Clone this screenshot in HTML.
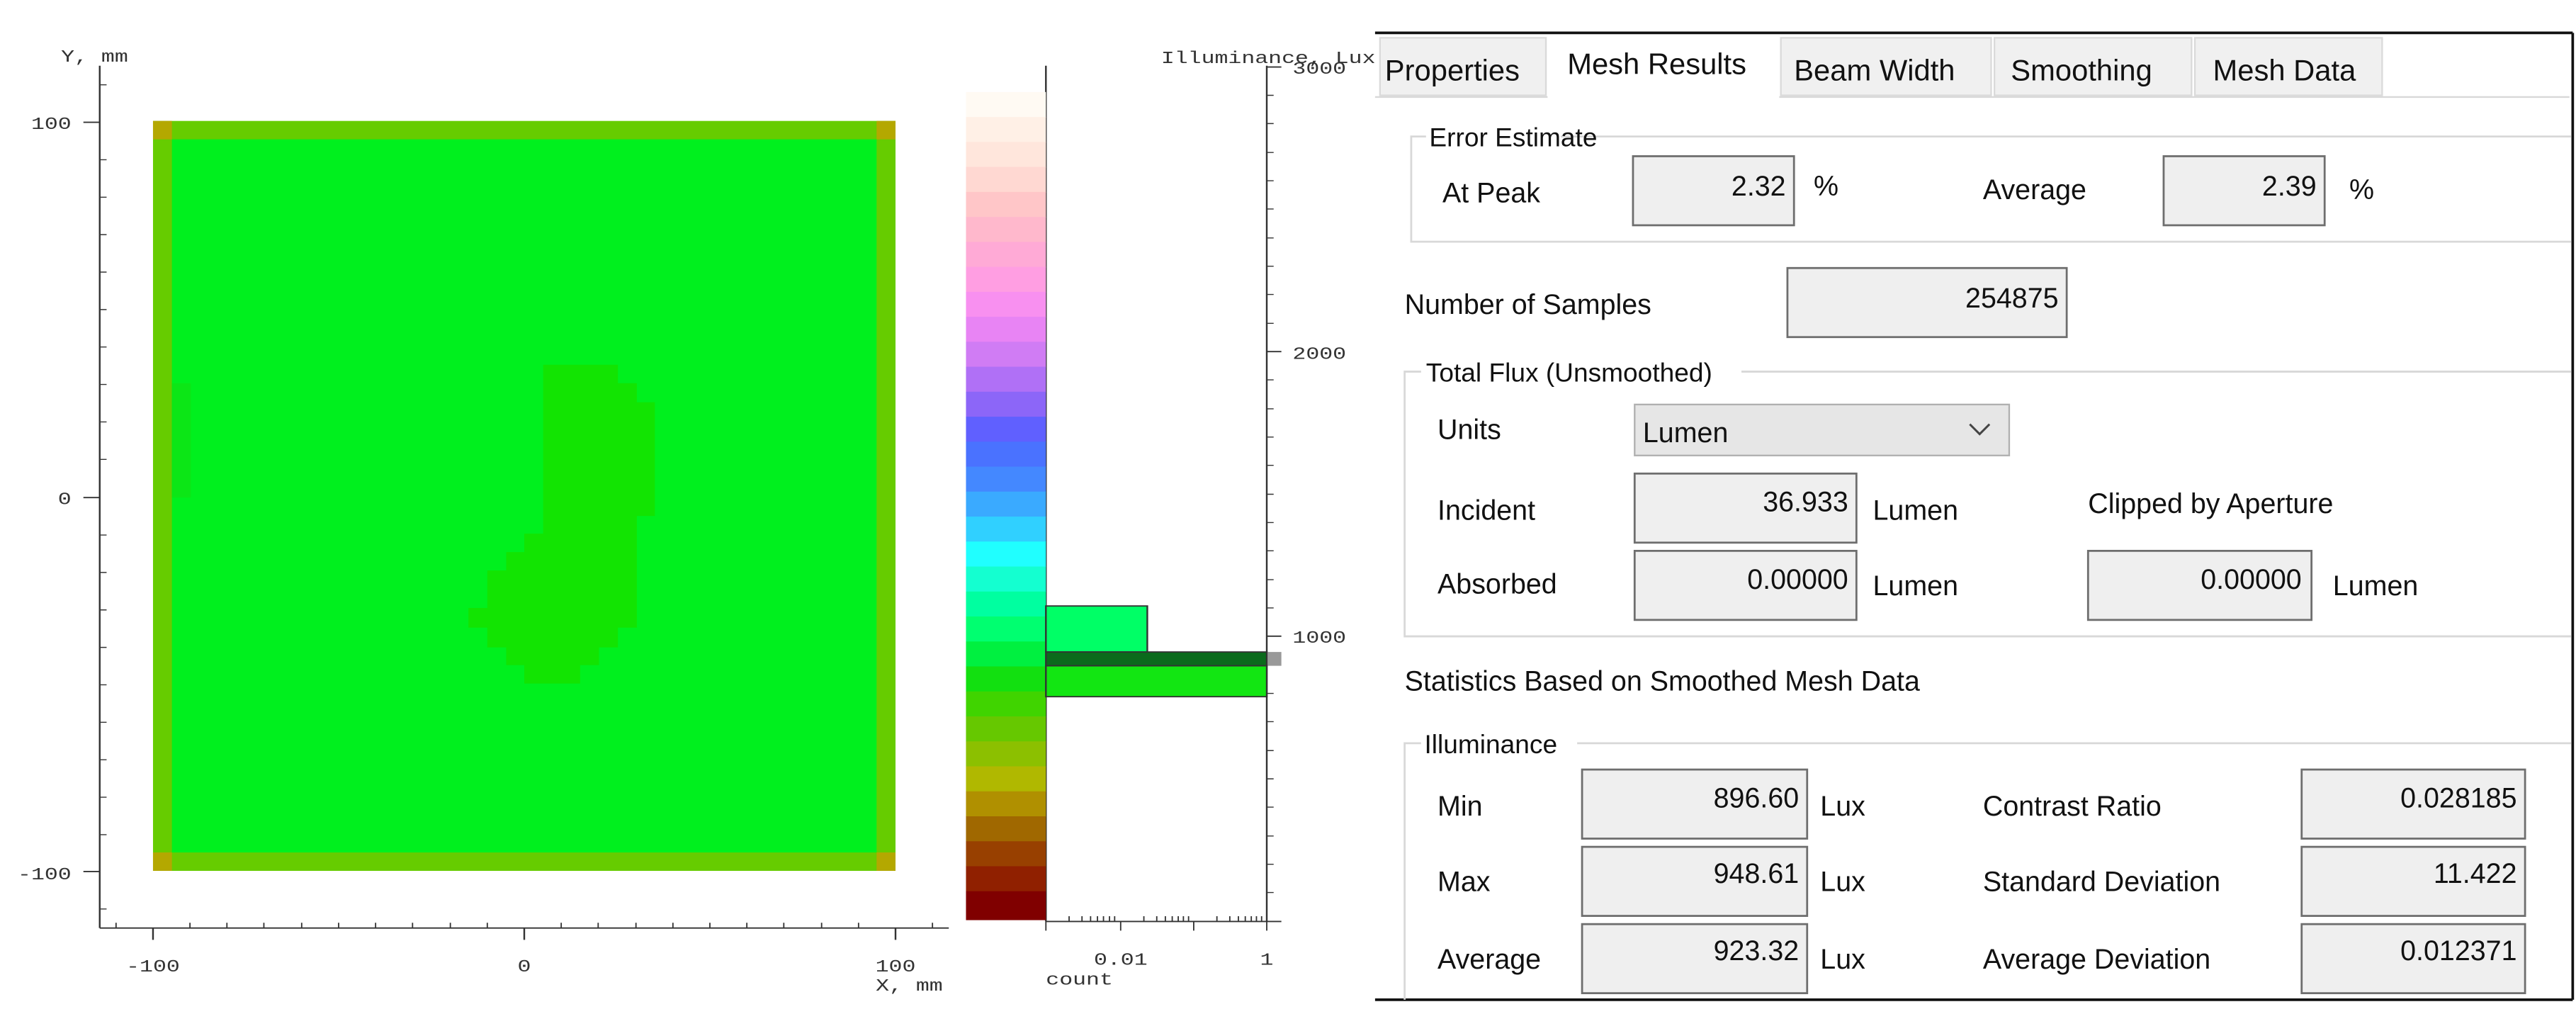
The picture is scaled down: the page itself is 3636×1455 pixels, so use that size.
<!DOCTYPE html>
<html><head><meta charset="utf-8"><style>
html,body{margin:0;padding:0;background:#fff;overflow:hidden;}
svg{display:block;}
.m{font-family:"Liberation Mono",monospace;font-size:26px;fill:#333;}
.s{font-family:"Liberation Sans",sans-serif;font-size:17px;fill:#111;}
.b{fill:#efefef;stroke:#6e6e6e;stroke-width:1.2;}
.g{fill:none;stroke:#d8d8d8;stroke-width:1.2;}
</style></head><body>
<svg width="3636" height="1455" viewBox="0 0 1568 627" preserveAspectRatio="none">
<rect width="1568" height="627" fill="#fff"/>
<g transform="translate(-0.5,0) scale(0.5231,0.3997)">
  <g stroke="#333" stroke-width="2" fill="none">
    <line x1="117" y1="100" x2="117" y2="1412"/>
    <line x1="117" y1="1412" x2="1105" y2="1412"/>
    <line x1="1218" y1="100" x2="1218" y2="1402"/>
    <line x1="1218" y1="1402" x2="1492" y2="1402"/>
    <line x1="1475" y1="100" x2="1475" y2="1402"/>
    <line x1="1475" y1="102" x2="1492" y2="102"/>
    <line x1="1475" y1="535" x2="1492" y2="535"/>
    <line x1="1475" y1="968" x2="1492" y2="968"/>
    <line x1="98" y1="186" x2="117" y2="186"/>
    <line x1="98" y1="757" x2="117" y2="757"/>
    <line x1="98" y1="1326" x2="117" y2="1326"/>
    <line x1="179" y1="1412" x2="179" y2="1430"/>
    <line x1="611" y1="1412" x2="611" y2="1430"/>
    <line x1="1043" y1="1412" x2="1043" y2="1430"/>
  </g>
  <g stroke="#333" stroke-width="1.5">
    <path d="M117 129h8M117 243h8M117 300h8M117 357h8M117 414h8M117 471h8M117 528h8M117 585h8M117 642h8M117 699h8M117 814h8M117 871h8M117 928h8M117 985h8M117 1042h8M117 1099h8M117 1156h8M117 1213h8M117 1270h8M117 1383h8"/>
    <path d="M136 1412v-8M222 1412v-8M265 1412v-8M308 1412v-8M352 1412v-8M395 1412v-8M438 1412v-8M481 1412v-8M525 1412v-8M568 1412v-8M654 1412v-8M697 1412v-8M741 1412v-8M784 1412v-8M827 1412v-8M870 1412v-8M913 1412v-8M957 1412v-8M1000 1412v-8M1086 1412v-8"/>
    <path d="M1475 145h8M1475 188h8M1475 232h8M1475 275h8M1475 318h8M1475 362h8M1475 405h8M1475 448h8M1475 492h8M1475 578h8M1475 622h8M1475 665h8M1475 708h8M1475 752h8M1475 795h8M1475 838h8M1475 882h8M1475 925h8M1475 1012h8M1475 1055h8M1475 1098h8M1475 1142h8M1475 1185h8M1475 1228h8M1475 1272h8M1475 1315h8M1475 1358h8"/>
    <path d="M1218 1402v14M1305 1402v14M1390 1402v14M1475 1402v14M1245 1402v-8M1260 1402v-8M1270 1402v-8M1278 1402v-8M1285 1402v-8M1292 1402v-8M1298 1402v-8M1332 1402v-8M1347 1402v-8M1357 1402v-8M1365 1402v-8M1372 1402v-8M1378 1402v-8M1384 1402v-8M1417 1402v-8M1432 1402v-8M1442 1402v-8M1450 1402v-8M1457 1402v-8M1463 1402v-8M1469 1402v-8"/>
  </g>
  <rect x="179" y="184" width="864" height="1141" fill="#66cc00"/>
  <rect x="201" y="212" width="820" height="1085" fill="#00f01e"/>
  <rect x="179" y="184" width="22" height="28" fill="#b4a800"/>
  <rect x="1021" y="184" width="22" height="28" fill="#b4a800"/>
  <rect x="179" y="1297" width="22" height="28" fill="#b4a800"/>
  <rect x="1021" y="1297" width="22" height="28" fill="#b4a800"/>
  <rect x="201" y="583" width="22" height="174" fill="#0ce616"/>
  <polygon fill="#12e402" points="633,555 720,555 720,583 742,583 742,612 763,612 763,785 742,785 742,955 720,955 720,985 698,985 698,1012 676,1012 676,1040 611,1040 611,1012 590,1012 590,985 568,985 568,955 546,955 546,925 568,925 568,868 590,868 590,840 611,840 611,812 633,812"/>
  <g>
    <rect x="1125" y="140" width="93" height="39" fill="#fffaf3"/>
    <rect x="1125" y="178" width="93" height="39" fill="#fff0e6"/>
    <rect x="1125" y="216" width="93" height="39" fill="#ffe6dc"/>
    <rect x="1125" y="254" width="93" height="39" fill="#ffd8d2"/>
    <rect x="1125" y="292" width="93" height="39" fill="#ffc6c8"/>
    <rect x="1125" y="330" width="93" height="39" fill="#ffb8cc"/>
    <rect x="1125" y="368" width="93" height="39" fill="#ffaad6"/>
    <rect x="1125" y="406" width="93" height="39" fill="#ff9ee2"/>
    <rect x="1125" y="444" width="93" height="39" fill="#f890f0"/>
    <rect x="1125" y="482" width="93" height="39" fill="#e884f4"/>
    <rect x="1125" y="520" width="93" height="39" fill="#d07cf4"/>
    <rect x="1125" y="558" width="93" height="39" fill="#b070f6"/>
    <rect x="1125" y="596" width="93" height="39" fill="#8c66f8"/>
    <rect x="1125" y="634" width="93" height="39" fill="#6060ff"/>
    <rect x="1125" y="672" width="93" height="39" fill="#4a72ff"/>
    <rect x="1125" y="710" width="93" height="39" fill="#4488ff"/>
    <rect x="1125" y="748" width="93" height="39" fill="#3aaaff"/>
    <rect x="1125" y="786" width="93" height="39" fill="#30d0ff"/>
    <rect x="1125" y="824" width="93" height="39" fill="#20ffff"/>
    <rect x="1125" y="862" width="93" height="39" fill="#14ffd0"/>
    <rect x="1125" y="900" width="93" height="39" fill="#00ffa0"/>
    <rect x="1125" y="938" width="93" height="39" fill="#00ff70"/>
    <rect x="1125" y="976" width="93" height="39" fill="#00f040"/>
    <rect x="1125" y="1014" width="93" height="39" fill="#12e010"/>
    <rect x="1125" y="1052" width="93" height="39" fill="#40d400"/>
    <rect x="1125" y="1090" width="93" height="39" fill="#66c800"/>
    <rect x="1125" y="1128" width="93" height="39" fill="#8cc000"/>
    <rect x="1125" y="1166" width="93" height="39" fill="#b0b800"/>
    <rect x="1125" y="1204" width="93" height="39" fill="#b09000"/>
    <rect x="1125" y="1242" width="93" height="39" fill="#a06800"/>
    <rect x="1125" y="1280" width="93" height="39" fill="#984000"/>
    <rect x="1125" y="1318" width="93" height="39" fill="#902000"/>
    <rect x="1125" y="1356" width="93" height="44" fill="#800000"/>
  </g>
  <rect x="1218" y="922" width="118" height="70" fill="#00ff66" stroke="#333" stroke-width="2"/>
  <rect x="1218" y="992" width="257" height="21" fill="#0b6a1c" stroke="#333" stroke-width="2"/>
  <rect x="1218" y="1013" width="257" height="47" fill="#12e612" stroke="#333" stroke-width="2"/>
  <rect x="1476" y="992" width="16" height="21" fill="#999"/>
  <text class="m" x="72" y="94">Y, mm</text>
  <text class="m" x="84" y="196" text-anchor="end">100</text>
  <text class="m" x="84" y="767" text-anchor="end">0</text>
  <text class="m" x="84" y="1338" text-anchor="end">-100</text>
  <text class="m" x="179" y="1478" text-anchor="middle">-100</text>
  <text class="m" x="611" y="1478" text-anchor="middle">0</text>
  <text class="m" x="1043" y="1478" text-anchor="middle">100</text>
  <text class="m" x="1020" y="1507">X, mm</text>
  <text class="m" x="1352" y="96">Illuminance, Lux</text>
  <text class="m" x="1505" y="112">3000</text>
  <text class="m" x="1505" y="546">2000</text>
  <text class="m" x="1505" y="978">1000</text>
  <text class="m" x="1305" y="1468" text-anchor="middle">0.01</text>
  <text class="m" x="1475" y="1468" text-anchor="middle">1</text>
  <text class="m" x="1218" y="1498">count</text>
</g>

<line x1="837" y1="20" x2="1566" y2="20" stroke="#111" stroke-width="1.6"/>
<line x1="1566" y1="20" x2="1566" y2="608" stroke="#111" stroke-width="1.6"/>
<line x1="837" y1="608" x2="1566" y2="608" stroke="#111" stroke-width="1.6"/>
<line x1="837" y1="59" x2="1564" y2="59" stroke="#d8d8d8"/>
<rect x="840" y="23" width="101" height="35" fill="#f0f0f0" stroke="#dadada"/>
<rect x="1084" y="23" width="128" height="35" fill="#f0f0f0" stroke="#dadada"/>
<rect x="1214" y="23" width="120" height="35" fill="#f0f0f0" stroke="#dadada"/>
<rect x="1336" y="23" width="114" height="35" fill="#f0f0f0" stroke="#dadada"/>
<rect x="942" y="21" width="141" height="39" fill="#fff"/>
<text class="s" x="843" y="49" style="font-size:18px">Properties</text>
<text class="s" x="954" y="45" style="font-size:18px">Mesh Results</text>
<text class="s" x="1092" y="49" style="font-size:18px">Beam Width</text>
<text class="s" x="1224" y="49" style="font-size:18px">Smoothing</text>
<text class="s" x="1347" y="49" style="font-size:18px">Mesh Data</text>

<path class="g" d="M868 83H859V147H1565M950 83H1565"/>
<text class="s" x="870" y="89" style="font-size:16px">Error Estimate</text>
<text class="s" x="878" y="123">At Peak</text>
<rect class="b" x="994" y="95" width="98" height="42"/>
<text class="s" x="1087" y="119" text-anchor="end">2.32</text>
<text class="s" x="1104" y="119">%</text>
<text class="s" x="1207" y="121">Average</text>
<rect class="b" x="1317" y="95" width="98" height="42"/>
<text class="s" x="1410" y="119" text-anchor="end">2.39</text>
<text class="s" x="1430" y="121">%</text>

<text class="s" x="855" y="191">Number of Samples</text>
<rect class="b" x="1088" y="163" width="170" height="42"/>
<text class="s" x="1253" y="187" text-anchor="end">254875</text>

<path class="g" d="M865 226H855V387H1565M1060 226H1565"/>
<text class="s" x="868" y="232" style="font-size:16px">Total Flux (Unsmoothed)</text>
<text class="s" x="875" y="267">Units</text>
<rect x="995" y="246" width="228" height="31" fill="#e6e6e6" stroke="#b0b0b0"/>
<text class="s" x="1000" y="269">Lumen</text>
<path d="M1199 258l6 6 6-6" fill="none" stroke="#444" stroke-width="1.3"/>
<text class="s" x="875" y="316">Incident</text>
<rect class="b" x="995" y="288" width="135" height="42"/>
<text class="s" x="1125" y="311" text-anchor="end">36.933</text>
<text class="s" x="1140" y="316">Lumen</text>
<text class="s" x="1271" y="312">Clipped by Aperture</text>
<text class="s" x="875" y="361">Absorbed</text>
<rect class="b" x="995" y="335" width="135" height="42"/>
<text class="s" x="1125" y="358" text-anchor="end">0.00000</text>
<text class="s" x="1140" y="362">Lumen</text>
<rect class="b" x="1271" y="335" width="136" height="42"/>
<text class="s" x="1401" y="358" text-anchor="end">0.00000</text>
<text class="s" x="1420" y="362">Lumen</text>

<text class="s" x="855" y="420">Statistics Based on Smoothed Mesh Data</text>
<path class="g" d="M865 452H855V608M960 452H1565"/>
<text class="s" x="867" y="458" style="font-size:16px">Illuminance</text>

<text class="s" x="875" y="496">Min</text>
<rect class="b" x="963" y="468" width="137" height="42"/>
<text class="s" x="1095" y="491" text-anchor="end">896.60</text>
<text class="s" x="1108" y="496">Lux</text>
<text class="s" x="1207" y="496">Contrast Ratio</text>
<rect class="b" x="1401" y="468" width="136" height="42"/>
<text class="s" x="1532" y="491" text-anchor="end">0.028185</text>

<text class="s" x="875" y="542">Max</text>
<rect class="b" x="963" y="515" width="137" height="42"/>
<text class="s" x="1095" y="537" text-anchor="end">948.61</text>
<text class="s" x="1108" y="542">Lux</text>
<text class="s" x="1207" y="542">Standard Deviation</text>
<rect class="b" x="1401" y="515" width="136" height="42"/>
<text class="s" x="1532" y="537" text-anchor="end">11.422</text>

<text class="s" x="875" y="589">Average</text>
<rect class="b" x="963" y="562" width="137" height="42"/>
<text class="s" x="1095" y="584" text-anchor="end">923.32</text>
<text class="s" x="1108" y="589">Lux</text>
<text class="s" x="1207" y="589">Average Deviation</text>
<rect class="b" x="1401" y="562" width="136" height="42"/>
<text class="s" x="1532" y="584" text-anchor="end">0.012371</text>
</svg>
</body></html>
